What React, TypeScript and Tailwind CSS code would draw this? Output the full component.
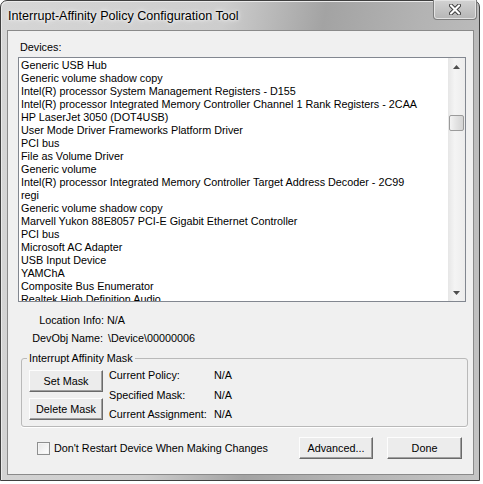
import React from "react";

const devices = [
  "Generic USB Hub",
  "Generic volume shadow copy",
  "Intel(R) processor System Management Registers - D155",
  "Intel(R) processor Integrated Memory Controller Channel 1 Rank Registers - 2CAA",
  "HP LaserJet 3050 (DOT4USB)",
  "User Mode Driver Frameworks Platform Driver",
  "PCI bus",
  "File as Volume Driver",
  "Generic volume",
  "Intel(R) processor Integrated Memory Controller Target Address Decoder - 2C99",
  "regi",
  "Generic volume shadow copy",
  "Marvell Yukon 88E8057 PCI-E Gigabit Ethernet Controller",
  "PCI bus",
  "Microsoft AC Adapter",
  "USB Input Device",
  "YAMChA",
  "Composite Bus Enumerator",
  "Realtek High Definition Audio",
];

function Btn({ children, className = "" }: { children: React.ReactNode; className?: string }) {
  return (
    <div
      className={
        "flex items-center justify-center h-[22px] w-[74px] bg-[#ececec] border border-t-[#fdfdfd] border-l-[#fdfdfd] border-r-[#6a6a6a] border-b-[#6a6a6a] shadow-[inset_-1px_-1px_0_#a0a0a0] text-black " +
        className
      }
    >
      {children}
    </div>
  );
}

export default function App() {
  return (
    <div
      className="w-[483px] h-[484px] bg-white overflow-hidden text-[10.8px] leading-[13px] text-black"
      style={{ fontFamily: '"Liberation Sans", Arial, sans-serif' }}
    >
      <div className="w-[480px] h-[481px] border border-[#3f3f3f] rounded-t-[7px] flex flex-col bg-[linear-gradient(100deg,#d6d6d6_0%,#cdcdcd_40%,#a3a3a3_58%,#b3b3b3_75%,#c4c4c4_100%)] shadow-[inset_1px_1px_0_#eaeaea]">
        {/* Title bar */}
        <div className="h-[29px] flex items-start justify-between pl-[7px] pr-[2px] shrink-0">
          <div
            className="mt-[7px] text-[12.6px] leading-[16px] text-black [text-shadow:0_0_6px_#ffffff,0_0_3px_#ffffff]"
            style={{ fontFamily: '"Liberation Sans", Arial, sans-serif' }}
          >
            Interrupt-Affinity Policy Configuration Tool
          </div>
          <div className="-mt-[1px] w-[44px] h-[20px] rounded-b-[4px] border border-t-0 border-[#7d7d7d] bg-[linear-gradient(180deg,#d2d2d2,#b6b6b6)] shadow-[inset_0_0_0_1px_#e4e4e4] flex items-center justify-center">
            <svg width="12" height="11" viewBox="0 0 12 11">
              <path d="M2 1.5 L10 9.5 M10 1.5 L2 9.5" stroke="#3a3a3a" strokeWidth="4" strokeLinecap="round" />
              <path d="M2 1.5 L10 9.5 M10 1.5 L2 9.5" stroke="#ffffff" strokeWidth="2.2" strokeLinecap="round" />
            </svg>
          </div>
        </div>

        {/* Content */}
        <div className="flex-1 ml-[6px] mr-[5px] mb-[5px] bg-[#f0f0f0] border border-[#8a8a8a] flex flex-col">
          <div className="mt-[10px] ml-[12px] h-[13px]">Devices:</div>

          {/* Listbox */}
          <div className="mt-[3px] ml-[10px] w-[448px] h-[245px] border border-[#828790] bg-white flex">
            <div className="flex-1 overflow-hidden pt-[1px]">
              {devices.map((d, i) => (
                <div key={i} className="h-[13px] pl-[2px] whitespace-nowrap">
                  {d}
                </div>
              ))}
            </div>
            <div className="w-[17px] bg-[linear-gradient(90deg,#e6e6e6,#f4f4f4_40%,#ececec)] flex flex-col items-center">
              <div className="h-[17px] w-full flex items-center justify-center">
                <svg width="7" height="4" viewBox="0 0 7 4">
                  <path d="M0 4 L3.5 0 L7 4 Z" fill="#4d4d4d" />
                </svg>
              </div>
              <div className="mt-[40px] w-[15px] h-[16px] rounded-[2px] border border-[#9b9b9b] bg-[linear-gradient(90deg,#f3f3f3,#e2e2e2_50%,#d4d4d4)]" />
              <div className="flex-1" />
              <div className="h-[17px] w-full flex items-center justify-center">
                <svg width="7" height="4" viewBox="0 0 7 4">
                  <path d="M0 0 L7 0 L3.5 4 Z" fill="#4d4d4d" />
                </svg>
              </div>
            </div>
          </div>

          {/* Info rows */}
          <div className="mt-[12px] flex h-[13px]">
            <div className="w-[96px] text-right">Location Info:</div>
            <div className="ml-[3px]">N/A</div>
          </div>
          <div className="mt-[5px] flex h-[13px]">
            <div className="w-[95px] text-right">DevObj Name:</div>
            <div className="ml-[5px]">\Device\00000006</div>
          </div>

          {/* Group box */}
          <fieldset className="mt-[7px] ml-[13px] w-[447px] h-[75px] border border-[#b9b9b9] rounded-[3px] shadow-[0_1px_0_#ffffff]">
            <legend className="ml-[5px] px-[2px] h-[13px] leading-[13px]">Interrupt Affinity Mask</legend>
            <div className="flex pl-[7px]">
              <div className="flex flex-col mt-[5px] gap-[6px]">
                <Btn>Set Mask</Btn>
                <Btn>Delete Mask</Btn>
              </div>
              <div className="ml-[6px] flex flex-col">
                <div className="mt-[4px] flex h-[13px]">
                  <div className="w-[105px]">Current Policy:</div>
                  <div>N/A</div>
                </div>
                <div className="mt-[7px] flex h-[13px]">
                  <div className="w-[105px]">Specified Mask:</div>
                  <div>N/A</div>
                </div>
                <div className="mt-[6px] flex h-[13px]">
                  <div className="w-[105px]">Current Assignment:</div>
                  <div>N/A</div>
                </div>
              </div>
            </div>
          </fieldset>

          {/* Bottom row */}
          <div className="mt-[10px] flex items-center h-[22px] mr-[11px]">
            <div className="ml-[29px] w-[13px] h-[13px] border border-[#8e8f8f] bg-[linear-gradient(135deg,#e6e6e6,#ffffff)] shadow-[inset_0_0_0_1px_#f4f4f4]" />
            <div className="ml-[4px] mt-[1px]">Don't Restart Device When Making Changes</div>
            <div className="flex-1" />
            <Btn>Advanced...</Btn>
            <Btn className="ml-[14px] w-[75px]">Done</Btn>
          </div>
        </div>
      </div>
    </div>
  );
}
